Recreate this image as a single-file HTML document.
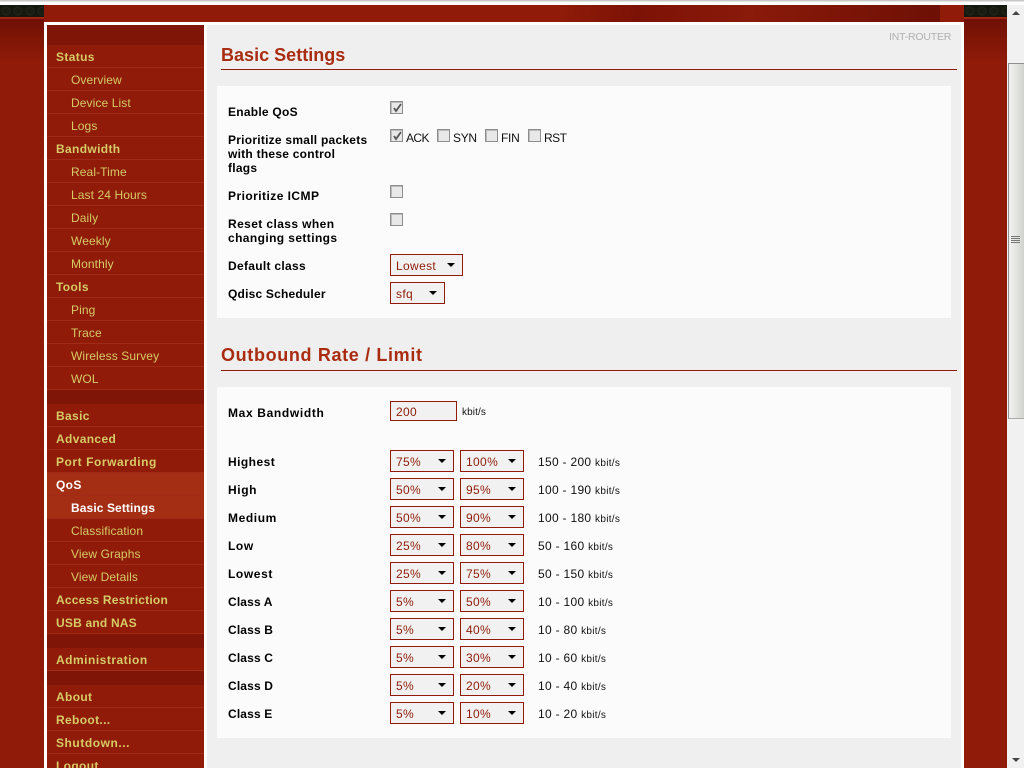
<!DOCTYPE html>
<html><head><meta charset="utf-8"><title>QoS Basic Settings</title>
<style>
html,body{margin:0;padding:0;width:1024px;height:768px;overflow:hidden;background:#8f1b08;font-family:"Liberation Sans",sans-serif;font-size:11px;color:#000}
div,span{position:absolute;white-space:nowrap;box-sizing:border-box}
#top{left:0;top:0;width:1024px;height:5px;background:linear-gradient(#c8c8c8 0,#c8c8c8 1px,#fff 2px)}
#hdr{left:0;top:5px;width:1007px;height:17px;background:#8f1b08}
.hex{top:5px;height:12px;width:44px;background:#14180e;background-image:radial-gradient(circle at 6px 6px,#191d11 3px,#20251a 4px,#14180e 5px);background-size:12px 12px}
.hs{top:17px;height:2px;width:44px;background:#a02410}
.grad{top:19px;width:44px;height:42px;background:linear-gradient(#6f1005,#8f1b08)}
#tex{left:560px;top:5px;width:380px;height:17px;background:linear-gradient(90deg,#8f1b08,#7c1206 20%,#8a1a0a 50%,#6e1005 100%)}
#white{left:44px;top:22px;width:920px;height:746px;background:#fff}
#nav{left:47px;top:25px;width:157px;height:743px;background:#8f1b08;overflow:hidden}
.gap{left:0;width:157px;background:#7f1507}
.n{left:0;width:157px;height:23px;border-bottom:1px solid #a02c17;color:#d6cb66;line-height:24px;padding-left:9px;font-weight:bold;font-size:12px;letter-spacing:.35px}
.s{padding-left:24px;font-weight:normal;letter-spacing:.1px}
.a{background:#a32e14;color:#fff}
#main{left:207px;top:25px;width:754px;height:743px;background:#efefef}
.rt{left:889px;top:31px;color:#b0b0b0;font-size:10.5px;letter-spacing:-.2px}
h2{position:absolute;margin:0;left:221px;font:bold 18px "Liberation Sans",sans-serif;color:#a92c11;line-height:22px;white-space:nowrap}
.hr{left:221px;width:736px;height:1px;background:#8f1b08}
.box{left:217px;width:734px;background:#fbfbfb}
.l{left:228px;font:bold 12px/14px "Liberation Sans",sans-serif;letter-spacing:.45px;color:#000}
.cl{letter-spacing:.15px}.hi{letter-spacing:.6px}
.t{font:12px/14px "Liberation Sans",sans-serif;color:#111;letter-spacing:.3px}
.f{letter-spacing:-.3px}
.u{font-size:10px}
.t span{position:static}
.c{width:13px;height:13px;background:#e8e8e8;border:1px solid #8e8e8e;box-shadow:inset 1px 1px 0 #bbb}
.c svg{position:absolute;left:1px;top:1px}
.sel{height:22px;background:#f1f1f1;border:1px solid #8f1b08;color:#8f1b08;font:12px/22px "Liberation Sans",sans-serif;padding-left:5px;letter-spacing:.35px}
.sel i{position:absolute;right:7px;top:8px;width:0;height:0;border-left:4px solid transparent;border-right:4px solid transparent;border-top:4px solid #000}
.a1{left:390px;width:64px}.a2{left:460px;width:64px}
#sb{left:1007px;top:5px;width:17px;height:763px;background:#f1f1f1}
#th{left:1px;top:58px;width:16px;height:356px;background:linear-gradient(90deg,#f2f2f2,#e6e7e4 40%,#cfd2cd);border:1px solid #8e8e8e;border-right:none;border-bottom-color:#aaa}
.g{left:2px;width:9px;height:1px;background:#777}
</style></head><body>
<div id="top"></div><div id="hdr"></div><div id="tex"></div>
<div class="hex" style="left:0"></div><div class="hs" style="left:0"></div><div class="grad" style="left:0"></div>
<div class="hex" style="left:964px;width:43px"></div><div class="hs" style="left:964px;width:43px"></div><div class="grad" style="left:964px;width:43px"></div>
<div id="white"></div>
<div id="nav">
<div class="gap" style="top:0;height:20px"></div>
<div class="n" style="top:20px">Status</div>
<div class="n s" style="top:43px">Overview</div>
<div class="n s" style="top:66px">Device List</div>
<div class="n s" style="top:89px">Logs</div>
<div class="n" style="top:112px">Bandwidth</div>
<div class="n s" style="top:135px">Real-Time</div>
<div class="n s" style="top:158px">Last 24 Hours</div>
<div class="n s" style="top:181px">Daily</div>
<div class="n s" style="top:204px">Weekly</div>
<div class="n s" style="top:227px">Monthly</div>
<div class="n" style="top:250px">Tools</div>
<div class="n s" style="top:273px">Ping</div>
<div class="n s" style="top:296px">Trace</div>
<div class="n s" style="top:319px">Wireless Survey</div>
<div class="n s" style="top:342px">WOL</div>
<div class="gap" style="top:365px;height:14px"></div>
<div class="n" style="top:379px">Basic</div>
<div class="n" style="top:402px">Advanced</div>
<div class="n" style="top:425px;letter-spacing:.55px">Port Forwarding</div>
<div class="n a" style="top:448px">QoS</div>
<div class="n s a" style="top:471px;font-weight:bold">Basic Settings</div>
<div class="n s" style="top:494px">Classification</div>
<div class="n s" style="top:517px">View Graphs</div>
<div class="n s" style="top:540px">View Details</div>
<div class="n" style="top:563px;letter-spacing:.22px">Access Restriction</div>
<div class="n" style="top:586px;letter-spacing:.2px">USB and NAS</div>
<div class="gap" style="top:609px;height:14px"></div>
<div class="n" style="top:623px;letter-spacing:.5px">Administration</div>
<div class="gap" style="top:646px;height:14px"></div>
<div class="n" style="top:660px">About</div>
<div class="n" style="top:683px">Reboot...</div>
<div class="n" style="top:706px;letter-spacing:.55px">Shutdown...</div>
<div class="n" style="top:729px">Logout</div>
</div>
<div id="main"></div>
<div class="rt">INT-ROUTER</div>
<h2 style="top:44px;letter-spacing:.02px">Basic Settings</h2><div class="hr" style="top:69px"></div>
<div class="box" style="top:86px;height:232px"></div>
<div class="l" style="top:105px;letter-spacing:.25px">Enable QoS</div>
<div class="c" style="left:390px;top:101px"><svg width="11" height="11"><path d="M2 5l2 3 5-7" fill="none" stroke="#555" stroke-width="1.8"/></svg></div>
<div class="l" style="top:133px;letter-spacing:.25px">Prioritize small packets<br>with these control<br>flags</div>
<div class="c" style="left:390px;top:129px"><svg width="11" height="11"><path d="M2 5l2 3 5-7" fill="none" stroke="#555" stroke-width="1.8"/></svg></div>
<div class="t f" style="left:406px;top:131px;letter-spacing:-.6px">ACK</div>
<div class="c" style="left:437px;top:129px"></div><div class="t f" style="left:453px;top:131px">SYN</div>
<div class="c" style="left:485px;top:129px"></div><div class="t f" style="left:501px;top:131px">FIN</div>
<div class="c" style="left:528px;top:129px"></div><div class="t f" style="left:544px;top:131px;letter-spacing:-.5px">RST</div>
<div class="l" style="top:189px">Prioritize ICMP</div><div class="c" style="left:390px;top:185px"></div>
<div class="l" style="top:217px;letter-spacing:.4px">Reset class when<br>changing settings</div><div class="c" style="left:390px;top:213px"></div>
<div class="l" style="top:259px;letter-spacing:.3px">Default class</div><div class="sel" style="left:390px;top:254px;width:73px">Lowest<i></i></div>
<div class="l" style="top:287px;letter-spacing:.2px">Qdisc Scheduler</div><div class="sel" style="left:390px;top:282px;width:55px">sfq<i></i></div>

<h2 style="top:344px;letter-spacing:.65px">Outbound Rate / Limit</h2><div class="hr" style="top:370px"></div>
<div class="box" style="top:387px;height:351px"></div>
<div class="l" style="top:406px;letter-spacing:.65px">Max Bandwidth</div>
<div class="sel" style="left:390px;top:401px;width:67px;height:20px;line-height:20px">200</div>
<div class="t u" style="left:462px;top:406px;letter-spacing:.1px">kbit/s</div>

<div class="l hi" style="top:455px;letter-spacing:.45px">Highest</div><div class="sel a1" style="top:450px">75%<i></i></div><div class="sel a2" style="top:450px">100%<i></i></div><div class="t" style="left:538px;top:455px">150 - 200 <span class="u">kbit/s</span></div>
<div class="l hi" style="top:483px">High</div><div class="sel a1" style="top:478px">50%<i></i></div><div class="sel a2" style="top:478px">95%<i></i></div><div class="t" style="left:538px;top:483px">100 - 190 <span class="u">kbit/s</span></div>
<div class="l hi" style="top:511px">Medium</div><div class="sel a1" style="top:506px">50%<i></i></div><div class="sel a2" style="top:506px">90%<i></i></div><div class="t" style="left:538px;top:511px">100 - 180 <span class="u">kbit/s</span></div>
<div class="l hi" style="top:539px">Low</div><div class="sel a1" style="top:534px">25%<i></i></div><div class="sel a2" style="top:534px">80%<i></i></div><div class="t" style="left:538px;top:539px">50 - 160 <span class="u">kbit/s</span></div>
<div class="l hi" style="top:567px">Lowest</div><div class="sel a1" style="top:562px">25%<i></i></div><div class="sel a2" style="top:562px">75%<i></i></div><div class="t" style="left:538px;top:567px">50 - 150 <span class="u">kbit/s</span></div>
<div class="l cl" style="top:595px">Class A</div><div class="sel a1" style="top:590px">5%<i></i></div><div class="sel a2" style="top:590px">50%<i></i></div><div class="t" style="left:538px;top:595px">10 - 100 <span class="u">kbit/s</span></div>
<div class="l cl" style="top:623px">Class B</div><div class="sel a1" style="top:618px">5%<i></i></div><div class="sel a2" style="top:618px">40%<i></i></div><div class="t" style="left:538px;top:623px">10 - 80 <span class="u">kbit/s</span></div>
<div class="l cl" style="top:651px">Class C</div><div class="sel a1" style="top:646px">5%<i></i></div><div class="sel a2" style="top:646px">30%<i></i></div><div class="t" style="left:538px;top:651px">10 - 60 <span class="u">kbit/s</span></div>
<div class="l cl" style="top:679px">Class D</div><div class="sel a1" style="top:674px">5%<i></i></div><div class="sel a2" style="top:674px">20%<i></i></div><div class="t" style="left:538px;top:679px">10 - 40 <span class="u">kbit/s</span></div>
<div class="l cl" style="top:707px">Class E</div><div class="sel a1" style="top:702px">5%<i></i></div><div class="sel a2" style="top:702px">10%<i></i></div><div class="t" style="left:538px;top:707px">10 - 20 <span class="u">kbit/s</span></div>

<div id="sb">
<div style="left:5px;top:6px;width:0;height:0;border-left:4px solid transparent;border-right:4px solid transparent;border-bottom:4px solid #444"></div>
<div id="th"><div class="g" style="top:172px"></div><div class="g" style="top:174px"></div><div class="g" style="top:176px"></div><div class="g" style="top:178px"></div></div>
<div style="left:5px;top:753px;width:0;height:0;border-left:4px solid transparent;border-right:4px solid transparent;border-top:4px solid #444"></div>
</div>
</body></html>
